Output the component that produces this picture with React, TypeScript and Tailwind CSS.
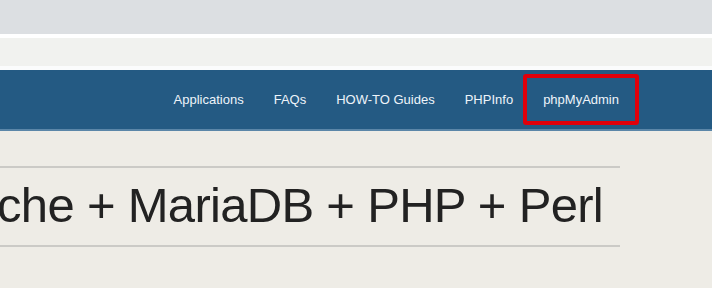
import React from 'react';

const NAV_LINKS = ['Applications', 'FAQs', 'HOW-TO Guides', 'PHPInfo', 'phpMyAdmin'];

export default function App() {
  return (
    <div
      className="w-[712px] h-[288px] overflow-hidden bg-[#eeece6]"
      style={{ fontFamily: '"Liberation Sans", Arial, sans-serif' }}
    >
      {/* Browser chrome strips */}
      <div className="h-[34px] bg-[#dcdfe2]" />
      <div className="h-[4px] bg-white" />
      <div className="h-[28px] bg-[#f1f2ef]" />
      <div className="h-[4px] bg-[#fbfcfc]" />

      {/* Navbar */}
      <nav className="h-[59px] bg-[#245a83] flex items-center justify-end pr-[78px]">
        <ul className="flex items-center">
          {NAV_LINKS.map((link) => (
            <li key={link} className="relative">
              <a className="block px-[15px] text-[13px] leading-[20px] text-[#eef4fa]">{link}</a>
              {link === 'phpMyAdmin' && (
                <span className="absolute left-[-5px] right-[-5px] top-[-16px] bottom-[-15px] border-[4px] border-[#e0000b] rounded-[3px]" />
              )}
            </li>
          ))}
        </ul>
      </nav>
      <div className="h-[2px] bg-[#5b86a8]" />

      {/* Page heading */}
      <div className="w-[620px] mt-[35px]">
        <div className="h-[2px] bg-[#cbcac6]" />
        <div className="h-[77px] flex items-center justify-end pr-[17px]">
          <h1 className="whitespace-nowrap text-[49px] leading-none tracking-[-0.7px] text-[#222222] translate-y-[-1px]">
            Apache + MariaDB + PHP + Perl
          </h1>
        </div>
        <div className="h-[2px] bg-[#cbcac6]" />
      </div>
    </div>
  );
}
